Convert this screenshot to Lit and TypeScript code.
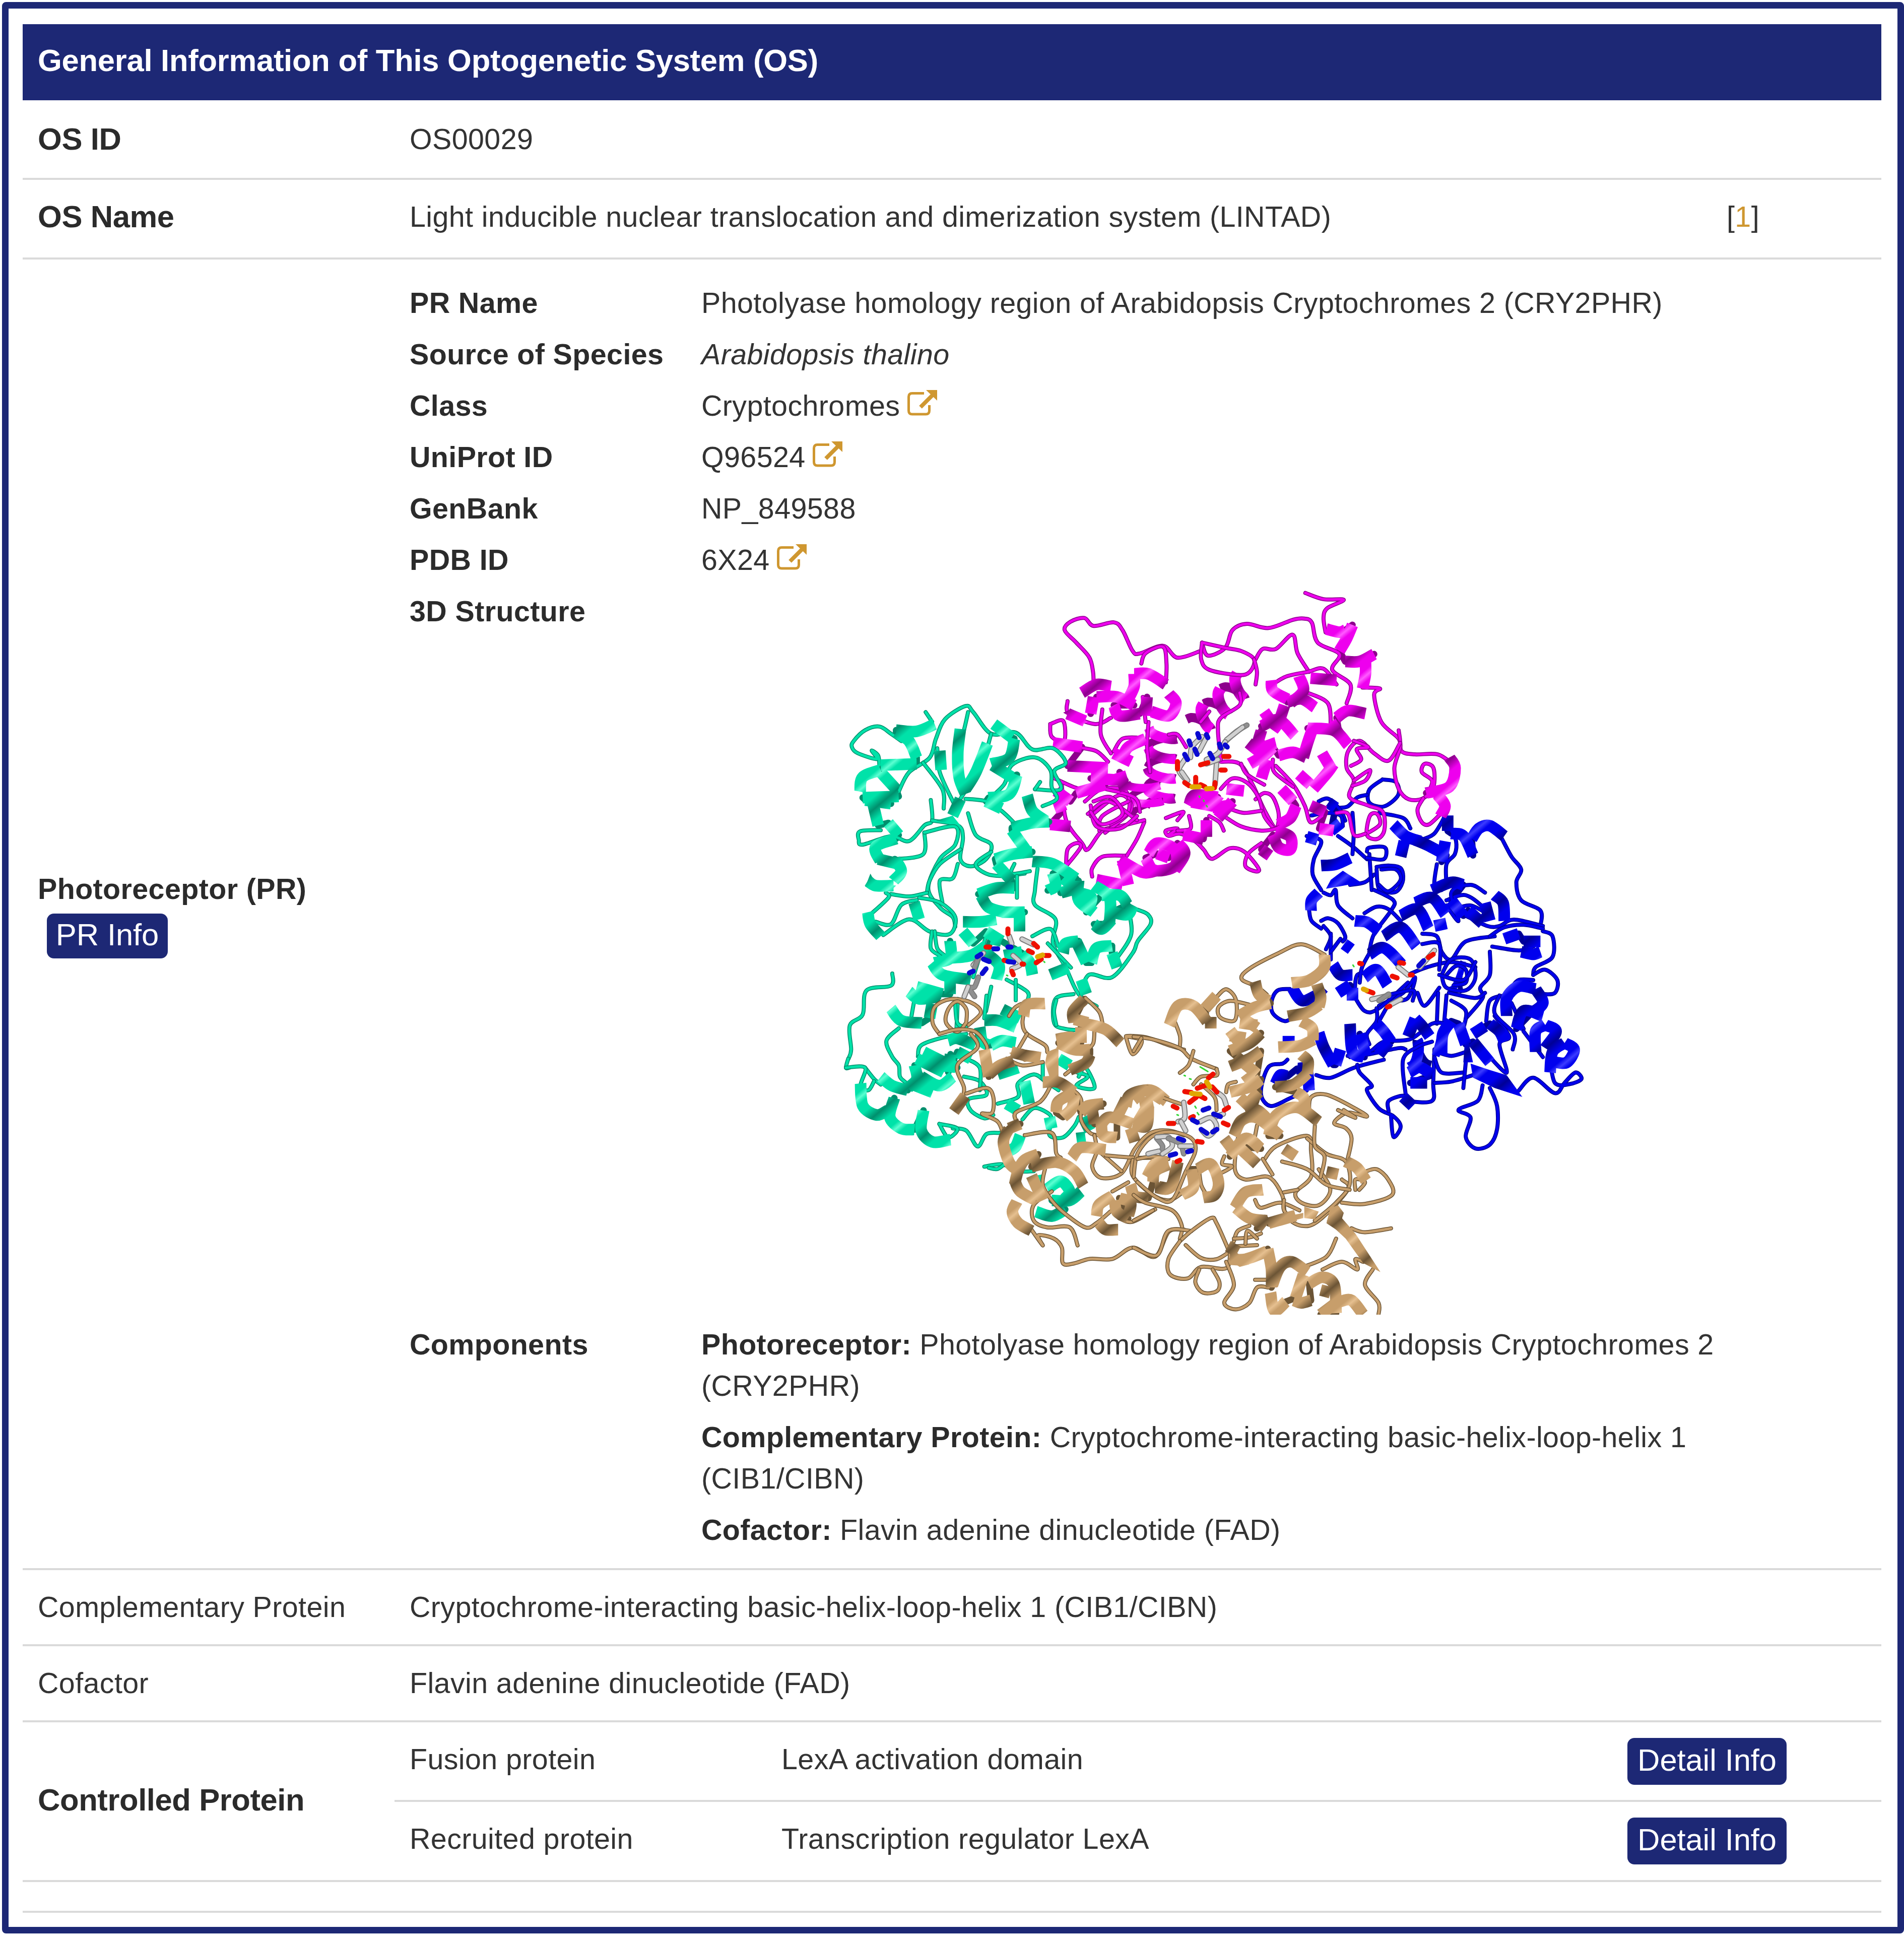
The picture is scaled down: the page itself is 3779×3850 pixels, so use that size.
import { css, html, svg, LitElement } from "lit";
import { customElement, property } from "lit/decorators.js";

type Point = [number, number];

interface Region {
  x: number;
  y: number;
  sx: number;
  sy: number;
}

interface Strand {
  region: Region;
  // thin loops
  coils?: string;
  // wide flat bands
  bands?: string;
  // "x,y x,y radius turns"
  helices?: string;
  // filled arrow heads
  sheets?: string;
}

interface Chain {
  name: string;
  dark: string;
  mid: string;
  light: string;
  strands: Strand[];
}

const NORTH_WEST: Region = { x: 1600, y: 1350, sx: 0.5102, sy: 0.4783 };
const NORTH: Region = { x: 2050, y: 1150, sx: 0.574, sy: 0.4145 };
const EAST: Region = { x: 2450, y: 1500, sx: 0.4783, sy: 0.5102 };
const SOUTH_WEST: Region = { x: 1650, y: 1850, sx: 0.4464, sy: 0.4464 };
const SOUTH: Region = { x: 2250, y: 1850, sx: 0.3827, sy: 0.5102 };

const CHAINS: Chain[] = [
  {
    name: "blue",
    dark: "#000096",
    mid: "#0000ee",
    light: "#3c3cff",
    strands: [
      {
        region: EAST,
        coils: `300,310 360,330 330,400 325,460 360,520
          615,90 560,130 560,180 620,195 680,150 670,100 615,90
          550,150 510,160 470,195 430,200
          350,175 390,165 440,210 460,250
          320,230 380,220 440,230 450,270
          430,310 490,350 550,400
          490,220 495,300 490,380
          600,220 700,240 730,280
          870,240 830,300 790,320
          1110,320 1150,390 1190,440 1170,490 1190,560 1270,600 1270,660
          900,290 920,330 915,380 880,420 880,500
          840,420 830,500 860,520
          480,500 540,490 580,460
          560,380 565,450 570,520
          590,430 640,425 690,435 700,480 680,520 650,530 600,515 590,440
          610,440 670,440 690,480 640,525 600,500
          550,370 560,355 625,355 620,400 550,395
          310,600 320,640 360,670
          370,530 400,540 420,520 430,580 490,630
          360,640 390,630 430,650 460,700 450,720
          380,750 400,700 370,660
          580,520 660,560 650,600 580,690 560,760
          540,610 590,585 640,595 690,640
          960,620 1050,660 1100,660 1160,635 1280,660
          1280,680 1320,700 1320,780 1250,820 1240,850
          1070,740 1180,755 1240,740
          1060,760 1060,850 1020,900 1030,940 960,1020
          780,690 840,700 860,760 900,790 960,720 1080,700
          1280,670 1200,655 1120,665 1060,700
          720,850 800,820 900,800 1000,820
          780,730 850,730 850,830
          860,850 900,790 980,790 1000,860 960,910 880,900 860,850
          880,850 920,815 960,830 960,880 910,890
          850,850 950,870 1000,800
          880,560 960,540 1040,600 1000,640
          900,600 980,580 1060,620
          880,580 930,640 900,530 980,500 1040,530
          600,970 700,920 750,860 720,940 660,950
          490,920 540,990 600,980 720,880
          760,920 790,970 850,900
          630,930 740,910 740,950
          500,900 510,850 560,840
          570,750 530,820 520,880
          590,980 590,1030 550,1080 560,1120
          600,1030 630,980
          400,690 400,790
          400,760 440,710
          230,905 180,910 155,950 160,1000 210,1030 250,1010
          845,920 840,1040
          880,930 870,1040
          900,950 960,990 950,1060
          890,920 1000,940 1040,920
          1045,1030 1060,950 1120,930
          480,1170 560,1150 620,1110 730,1100 820,1040 880,1040
          470,1165 550,1160 680,1135 710,1140
          340,1240 400,1250 500,1210 620,1180
          510,1200 520,1230 570,1280 550,1300 600,1370 660,1400 690,1440 660,1480 650,1400
          640,1380 640,1340 700,1320 720,1340 820,1340 825,1270 830,1140
          710,1310 700,1180 760,1130 820,1110
          830,1170 860,1230 950,1230
          840,1150 900,1165 960,1150
          830,1270 900,1265 990,1240
          960,1190 950,1290
          1030,1280 1010,1340 930,1375 980,1405 960,1480 1000,1525 1060,1510 1090,1450 1090,1360 1060,1290
          1310,1180 1330,1270 1390,1275 1440,1255 1415,1230 1370,1270 1330,1310 1240,1250 1180,1300
          1080,1010 1140,1090 1100,1120 1130,1230 1060,1170
          1100,930 1080,1000 1160,1080 1155,1140
          1150,900 1180,870 1240,870
          220,1180 200,1195 140,1210 110,1310 150,1360 230,1330 300,1300`,
        bands: `390,180 420,200
          400,290 440,260
          660,265 710,310 770,330
          690,390 705,330
          750,325 800,345 880,385
          860,410 875,330
          885,230 885,290
          900,300 950,310 990,385
          985,320 1015,280 1060,270 1120,310
          300,312 345,325
          360,425 420,420 480,395
          350,530 320,560 318,600
          500,640 550,645 600,680
          410,810 440,850 490,850
          455,730 485,750
          430,920 480,890
          490,900 490,950
          240,900 280,950 340,930
          200,1110 250,1110
          350,920 370,900
          350,1075 370,1130 410,1200
          420,1200 440,1140
          480,1040 490,1150 540,1170
          520,1080 545,1160
          590,1040 620,1070 650,1110
          640,1110 600,1160
          720,1090 750,1020
          750,1020 780,1050 810,1090
          170,1275 190,1240 220,1245
          260,1215 300,1220 310,1300
          860,1160 865,1080 900,1030
          930,1040 960,1120
          990,1110 1060,1190
          990,1080 1040,1050
          1060,1040 1100,1070 1120,1110
          1190,760 1240,770 1270,760
          1120,710 1180,690
          1200,720 1270,720
          830,660 880,650
          540,860 590,830 635,890
          560,770 620,745 695,810
          620,700 690,665 755,740
          690,620 760,595 805,670
          750,570 820,550 875,615
          820,520 900,490 950,500
          900,560 950,620
          970,600 1030,650
          1080,540 1115,570 1120,640
          1040,570 1060,640
          700,1325 740,1360
          725,1230 770,1210 820,1240
          730,1270 800,1270`,
        helices: `720,1160 810,1150 26 1
          910,850 960,860 30 1`,
        sheets: `380,515 400,480 450,445 525,490 440,505
          980,1195 1060,1220 1130,1240 1195,1325 1080,1290 990,1250
          950,1190 960,1060 990,1190
          820,1160 850,1060 880,1110 850,1170`,
      },
      {
        // long coiled helix on the outer rim
        region: EAST,
        coils: `1240,850 1290,830 1340,870 1330,920 1280,925
          1150,960 1200,1060
          1200,1070 1280,1170`,
        bands: `1130,1010 1130,940 1180,895 1250,905
          1250,905 1280,960 1230,1000
          1170,1060 1200,990 1280,1010
          1250,1150 1250,1070 1290,1045
          1290,1045 1335,1070 1290,1135
          1310,1230 1320,1150 1370,1115
          1370,1115 1410,1140 1380,1190 1330,1190`,
      },
    ],
  },
  {
    name: "magenta",
    dark: "#8d008d",
    mid: "#ee00ee",
    light: "#ff5cff",
    strands: [
      {
        region: NORTH,
        coils: `942,62 1005,92 1075,95 1018,135 1005,180 1012,250
          210,500 208,440 195,370 150,300 110,240 130,200 178,182 210,220 280,203 310,240 345,340 370,352 450,315 500,372 580,340
          585,300 605,362 665,325 690,240 740,210 815,230 900,190 940,185 965,205 985,300 1060,355 1035,430 1098,500 1085,590
          585,300 665,325 720,340 765,380 750,440 710,455 610,430 582,380 585,300
          770,380 795,330 840,330 898,262 915,350 955,440
          765,380 775,440 770,500
          375,400 390,350 450,320 462,400 460,490
          1140,515 1200,520 1180,550 1205,680 1265,760 1275,820 1320,835 1400,835 1450,880
          1265,720 1270,800 1250,900 1265,1000 1300,1050 1350,1045 1385,990 1385,900 1355,880 1345,920 1380,960 1370,1010
          1270,780 1230,865 1180,830 1130,770 1090,820 1085,900 1110,960 1095,1040 1160,1080 1210,1110 1215,1200 1190,1240 1155,1220 1165,1130 1190,1120 1200,1170 1160,1210
          1110,960 1165,910 1150,960 1105,985
          1110,770 1160,800 1120,810 1135,860 1100,890
          1350,1045 1330,1100 1345,1160 1370,1170 1410,1120
          840,890 900,980 940,1080 960,1160 1000,1130
          1050,1115 1090,1120 1110,1220 1150,1215
          650,870 715,880 760,980 800,1100 840,1190 850,1120 830,1040 800,1020 770,1050
          650,1000 690,950 740,970 780,1040 800,1130 830,1185
          660,1130 720,1180 790,1200 840,1190 870,1165
          690,1100 730,1115 790,1105
          720,880 740,930 800,980
          830,860 835,920 900,990
          470,1220 500,1190 460,1200 470,1225 510,1215 560,1250 590,1290 620,1335 680,1285 730,1300 780,1380 770,1395 735,1370 745,1310 790,1260
          320,1320 240,1325 205,1380 205,1420
          325,1320 360,1240 385,1160
          60,690 105,675 108,770 65,750 60,690
          120,580 125,640 215,690 270,660
          110,770 160,800 220,820 260,870
          240,620 235,740 270,830
          280,820 310,760 370,755
          100,980 115,1150 170,1260 190,1290 240,1200 300,1180 385,1150
          115,1370 120,1290 150,1260 165,1280 115,1370
          75,950 160,1000 230,1000
          400,680 395,800 405,920
          380,560 390,680
          950,540 1020,590 1030,700
          840,490 880,460 950,440 1005,425 1050,500
          715,540 715,600 650,660 640,720 650,860
          580,680 610,630
          470,740 500,740 530,800
          660,1200 645,1160 610,1130
          540,1130 545,1190 500,1200
          200,1130 300,1030 340,1100 250,1210
          180,1060 240,1000 320,1010 330,1110 270,1170
          190,1120 260,1060 360,1150
          230,1200 240,1130 330,1060
          200,1080 220,1180 300,1190 360,1130
          210,1060 270,1040 310,1120 240,1170 200,1110
          250,1000 350,1040 370,1110
          460,1140 520,1110 500,1150`,
        bands: `1015,235 1060,250 1080,240
          1105,215 1085,280 1060,340
          1080,390 1130,390 1180,355
          1150,390 1150,450 1140,520
          330,570 350,510 350,450
          350,450 400,450 460,500
          120,640 180,675
          70,780 170,800
          120,890 260,900
          210,560 200,640
          220,560 290,560 350,600
          280,600 300,650 370,640
          395,560 390,650
          470,545 495,590 470,650 410,630
          1440,850 1460,900 1440,990 1360,1020
          1400,1030 1425,1080 1410,1130
          220,1435 310,1460
          310,1340 330,1460
          300,1340 380,1400 430,1390
          85,1050 100,1110
          60,1170 130,1180
          80,1010 130,1060
          150,1020 250,980
          200,950 320,960
          300,920 320,1010
          390,760 330,800 310,850
          520,1220 590,1240
          600,1150 600,1230
          540,1080 560,1030 640,1040
          620,1090 680,1080
          690,1060 640,1140
          670,1000 730,1010
          280,830 340,870
          170,540 220,500 270,510
          825,480 830,530 880,570
          880,585 930,570 975,610
          920,460 935,530 890,590
          960,470 1050,480
          800,630 830,690
          790,700 850,670 905,745
          870,600 850,680 830,720
          745,780 790,830
          790,720 780,800 840,780
          750,880 800,840 830,800
          850,840 900,825 945,850
          810,860 790,950
          935,850 950,780 970,700
          950,710 1040,720 1090,790
          1030,680 1060,740
          1050,660 1090,625 1150,640
          1000,830 1030,900
          920,930 960,980
          1040,880 1020,920 970,1000
          860,1000 900,1060
          910,1080 890,1140 850,1170
          960,1080 1010,1110
          990,1190 1040,1200
          840,1200 890,1230 890,1290 850,1280 830,1220
          790,1290 820,1320
          400,1310 430,1260 490,1290 490,1370 420,1390 390,1330
          430,1310 470,1330
          500,1260 525,1310 490,1390`,
        helices: `735,490 560,710 24 3
          450,710 440,1090 28 4
          380,960 400,1110 32 2`,
        sheets: `545,1090 570,1010 600,1000 660,1045 620,1110
          105,635 130,620 190,680 170,690`,
      },
    ],
  },
  {
    name: "teal",
    dark: "#008f6d",
    mid: "#00e2a9",
    light: "#5cffd2",
    strands: [
      {
        region: NORTH_WEST,
        coils: `285,350 280,310 255,290 275,325 200,300 178,275 185,250 230,205 285,190 330,220 370,250
          360,460 400,380 480,320 505,240 540,160 620,105 650,130 720,220 815,215 880,285 960,280 1010,340 965,375 990,450 890,450
          465,130 490,170
          700,500 770,430 800,350 890,318 950,370 955,440 975,490 920,520
          890,450 910,420
          620,490 700,500 760,540 810,590
          630,130 615,200 590,300 590,390
          720,220 680,360 630,440 570,540
          510,280 520,380 575,510
          455,340 530,450 535,530
          485,495 490,580 460,600 400,665 330,645 220,680 205,660 210,625 290,620
          490,580 590,600 610,650 600,740 640,770 700,740 720,680 660,640 630,550
          460,630 455,720 350,740
          460,630 580,605 580,680 520,740 475,860 520,940 570,980 580,1020
          600,700 520,760 480,830 470,880
          590,760 570,820 520,830 530,920
          330,885 400,895 470,880
          310,880 320,900 250,970
          270,1000 330,1010 370,930 430,910
          300,1055 400,990 480,1040 560,1050 580,980 520,920 440,900
          490,1040 485,1110 520,1140
          500,1040 510,1110 540,1140
          720,710 660,760 700,800 760,810 850,800
          810,760 800,800 870,790
          900,780 890,870 890,930 970,990 960,1090 1010,1190 1060,1300 1130,1350
          820,810 820,900
          1290,950 1330,970 1340,1010 1290,1080 1270,1130 1190,1230 1100,1220 1070,1300
          1250,930 1265,1050 1210,1150
          335,1215 330,1265 235,1285 220,1385 170,1430 175,1530 165,1568
          420,1330 410,1390
          720,1270 700,1370
          780,1240 860,1290 860,1330
          940,1090 1030,1190
          1040,1300 970,1320 965,1420 1010,1445 1070,1450
          700,1060 650,1230
          590,1320 585,1440
          880,1060 950,1030 980,1100`,
        bands: `500,180 430,210 350,205
          350,215 400,250 430,320
          430,345 290,350
          600,200 590,300 595,400 620,470
          705,260 660,380 620,450
          520,290 525,370
          600,490 570,560
          240,830 270,850 340,850
          240,960 250,1010 290,1060
          420,920 440,990
          210,460 220,400 290,370
          290,380 350,450
          360,480 220,485
          230,495 330,510
          260,510 280,600
          320,590 360,640
          350,655 270,690 290,750
          280,740 360,760
          345,740 370,790 340,830
          730,180 800,235
          810,240 790,320 720,345
          725,350 800,400
          820,390 790,470 710,485
          700,500 760,530
          860,475 880,540 930,580
          945,585 880,590 800,610
          800,620 860,710
          880,710 800,720 735,740
          740,760 800,830
          810,860 740,860 670,885
          680,890 710,940 770,960
          760,960 850,960
          830,960 830,1040
          1070,1240 1090,1300
          950,1220 1020,1190
          610,1000 680,1000 740,990
          610,1040 650,1090
          700,1040 760,1080
          880,750 960,760 1050,820
          960,800 970,850 940,870
          1000,820 1040,860 990,880
          1060,830 1060,910 1120,960
          1120,850 1180,900 1180,1010
          1120,1010 1150,1030 1190,990
          1060,880 1110,900 1090,960
          1150,890 1220,890 1250,930
          1190,960 1250,970 1270,930
          500,1170 560,1150 560,1080
          560,1150 640,1140 700,1100
          490,1170 530,1220 640,1240
          740,1240 750,1180 700,1130
          720,1070 760,1080
          840,1130 870,1170 880,1220
          770,1140 840,1125
          1000,1130 1010,1090 1060,1080
          1050,1080 1090,1170
          1110,1170 1130,1110 1190,1100
          1190,1130 1210,1190
          400,1290 440,1320 520,1310
          430,1270 530,1300
          560,1300 560,1230
          330,1360 370,1410 450,1420
          480,1400 490,1340`,
        sheets: `505,580 570,560 600,600
          230,855 250,800 270,840 350,850 330,870`,
      },
      {
        region: SOUTH_WEST,
        coils: `300,425 245,480 270,550 300,590 305,640 330,665
          150,600 190,650 220,675
          80,600 65,600 75,560
          65,600 150,600 130,680 165,700 190,660
          540,870 600,880 650,950 690,895 750,890
          385,550 400,500 500,465 600,450
          590,640 660,660 690,720 610,740 620,790 680,825 720,810
          600,560 660,600 660,700
          740,760 830,730 830,670 900,630 950,660 1010,700
          850,830 900,780 960,800 980,830 970,900 1030,910 1080,860 1100,820
          1100,640 1130,600 1170,690 1090,680 1140,640 1090,620
          940,580 940,650
          680,1040 760,1030 830,1060 900,1060
          700,1045 740,1050 780,1020
          550,300 560,400 600,420
          690,280 680,380
          820,210 820,300
          390,550 500,610
          480,850 520,910 560,870 480,850
          1000,300 990,350 1000,410`,
        bands: `130,670 140,770 200,810 250,790
          280,735 260,820 310,870 370,875
          410,790 400,880 450,930 530,920
          220,640 270,680 340,700
          340,690 380,650 370,590
          400,640 480,680 540,640
          380,560 440,590 500,620
          410,530 490,570 560,600
          530,540 520,620
          560,530 620,560
          350,670 450,710
          790,970 820,950 840,900
          960,1140 1020,1105 1060,1150 1040,1180
          910,1240 980,1260 1040,1230
          980,1190 1060,1190 1110,1150
          860,660 880,760
          1010,560 1060,590
          740,630 830,600
          520,480 560,470 640,500
          680,390 740,390 820,420
          660,420 670,480 700,500
          710,500 760,480 820,490
          760,340 840,380
          1090,915 1130,910
          970,820 980,870
          780,760 830,790
          1120,820 1150,880
          910,1080 925,1150`,
      },
    ],
  },
  {
    name: "tan",
    dark: "#6b5435",
    mid: "#c79e6b",
    light: "#e6c090",
    strands: [
      {
        region: SOUTH_WEST,
        coils: `480,450 450,400 460,330 530,295 620,310 665,355 610,410
          600,400 600,340 560,305 520,340 510,400 560,440 600,400
          480,450 560,430 640,440 690,500 690,540
          620,450 650,510 560,590 590,690 580,740
          600,715 690,690 720,730 715,800 670,805 740,840 765,900
          780,560 850,590 940,575
          790,370 820,330 860,320 850,400 870,450 950,500 960,530
          870,450 830,520
          1130,290 1190,350 1205,400
          1170,430 1165,490 1140,520
          1310,465 1340,540 1380,480 1310,460 1400,465 1500,500 1568,520
          980,670 930,750 820,800 830,850
          990,660 1060,690 1110,740 1110,830 1150,890 1190,900
          860,900 980,890 1000,980 1020,1000
          890,1320 940,1390 920,1345 990,1360 1025,1400 1030,1470 1080,1470 1150,1450 1250,1450 1340,1400 1440,1440 1500,1330 1568,1320
          980,1150 900,1210 900,1280 960,1310 1060,1310 1095,1390
          950,1050 940,1120 980,1190 1040,1250 1130,1310 1180,1290 1240,1240
          1280,1270 1340,1285 1440,1230
          1170,900 1180,970 1160,1040 1200,1090 1290,1070 1350,960 1420,890 1500,880 1568,900
          1200,980 1290,1060
          1220,990 1350,1000 1480,1000
          1340,1010 1340,1080 1420,1160 1500,1190 1568,1150
          1250,1150 1320,1110
          1040,630 1090,590`,
        bands: `545,795 595,725
          680,520 700,640
          700,630 750,590 810,570
          855,370 870,320 950,315
          800,530 860,545 930,555
          1080,400 1075,350 1125,295
          1080,385 1140,400
          1130,405 1220,430 1285,490
          1000,475 1060,465 1110,480
          1110,420 1110,490
          1010,490 1080,520 1150,520
          1150,540 1130,580 1060,610
          940,665 1010,665 1080,710
          1080,710 1010,750 1000,800
          1030,820 1070,780 1080,720
          1110,800 1140,770 1210,760
          1160,790 1170,850
          1200,850 1240,820 1340,850
          1200,830 1210,900 1270,910
          1270,820 1310,740
          1330,870 1350,930
          1410,770 1400,860 1340,850
          790,870 840,850
          790,870 765,930 790,1020 820,1050
          815,1120 830,1060 860,1010 920,985
          890,1040 1000,1020 1080,1060 1120,1125
          815,1100 840,1150 910,1190
          890,1080 940,1190
          825,1195 805,1240 830,1290 890,1325
          1070,1000 1110,955 1220,965
          1310,770 1330,720 1420,700 1490,750
          1370,760 1430,750
          1180,1260 1190,1210 1250,1170
          1190,1290 1220,1320 1275,1320
          1260,1190 1270,1240 1320,1270
          1280,1180 1330,1200 1320,1260
          1330,1120 1350,1170 1410,1180
          1430,1110 1440,1060 1500,1030
          1460,1130 1510,1130 1530,1060`,
        sheets: `960,530 1010,510 1010,650 970,640 950,580
          790,535 850,515 930,550 860,575`,
      },
      {
        region: SOUTH,
        coils: `690,240 640,210 560,180 600,140 750,80 870,45 990,85
          430,250 480,220 530,260 525,340 450,330 440,290 500,265 600,280
          210,340 240,400 240,440
          0,405 100,415 240,450 300,490 430,530
          240,545 285,515 310,460
          0,460 40,410
          70,600 150,640 260,670
          310,590 350,560 430,555 430,530
          350,590 420,640 430,690
          480,620 490,590 530,580
          910,700 920,640 1000,630 1140,680 1210,715 1110,700 1040,740 1100,760 1130,800 1110,880
          1060,690 1150,720 1090,690
          0,950 20,860 100,790 200,775 300,800 320,850 270,930 200,1040 120,1030 20,970
          20,880 100,870 180,880
          540,800 525,920 580,960 700,950 770,1020 790,1100 870,1140 960,1120 1110,1000 1080,960
          630,790 640,750
          680,880 740,830 900,790 920,850 920,950 840,1010 870,1050 960,1060 1020,1000 960,920
          670,880 720,940
          780,1010 850,1000
          900,800 1000,860 1100,890 1120,980 1050,1050 940,1120
          770,890 900,920 1000,980 1120,1000
          940,750 940,830 990,870 970,950
          630,1040 660,1070 760,1050 860,1080
          780,1040 780,1080 830,1120
          1080,1050 1200,1055 1340,1020 1320,960 1260,920 1200,930
          1150,1000 1150,960 1200,970 1170,1000
          1130,1150 1200,1165 1335,1150
          1050,1190 1000,1260 880,1300
          270,1215 350,1265 430,1270 500,1240
          0,1120 100,1080
          0,1020 60,1050 200,1080 250,1140 240,1190
          0,1225 120,1255 180,1160 300,1160
          240,1200 300,1160 400,1110 430,1130 490,1230
          240,1200 180,1270 190,1330 280,1345 350,1300 480,1305 500,1240
          480,1280 520,1370 470,1440 530,1465 600,1440 640,1380 700,1380
          340,1310 320,1360 360,1400 430,1395 445,1360 410,1310
          520,1200 540,1160 600,1140
          520,1190 600,1185 660,1170
          520,1220 640,1215
          580,1210 590,1160 640,1190
          340,930 350,980 370,1010
          440,940 510,910 460,900 470,870
          630,1350 700,1350
          1240,1310 1200,1370 1270,1440 1270,1485
          980,1310 1080,1280 1160,1310 1150,1270 1190,1280`,
        bands: `950,200 970,250 960,290
          990,85 985,140 910,185 820,195
          870,345 925,370 930,420
          965,280 900,310 800,325
          870,475 905,500 900,550
          935,415 860,440 750,445
          905,545 830,590 735,600
          840,620 880,640 890,690
          580,340 640,370
          500,380 560,440
          660,390 600,430 500,460
          530,480 640,550
          660,460 600,490 500,520
          500,400 580,410
          580,550 640,610
          660,570 600,600 500,620
          550,350 640,360
          550,640 620,690
          650,620 600,660
          630,190 650,240 700,265
          710,275 630,290 545,325
          185,360 230,285 310,285 380,345
          370,295 430,245
          370,350 430,350
          0,650 60,615 150,650
          20,740 60,690
          520,790 560,730 640,720 760,790
          700,790 740,710 850,680 960,735
          580,700 640,690 700,730
          470,800 510,840
          500,870 580,800 660,840
          540,830 640,900
          1100,890 1160,915 1205,965
          1000,930 1060,940
          670,1000 580,1010 525,1070
          530,1070 600,1110 690,1120
          640,1150 680,1110
          700,1130 840,1100
          70,950 110,900 180,890
          110,990 190,990 230,890
          250,1020 310,990 300,920
          330,920 400,900 440,970 420,1020 360,1030
          500,1270 580,1270 690,1240
          695,1230 715,1310 715,1380
          720,1370 760,1300 820,1280 900,1320
          710,1400 730,1470 790,1435
          840,1420 880,1330
          830,1430 870,1440 920,1430
          910,1365 980,1340 1040,1370 1050,1480
          970,1485 1050,1440
          1070,1435 1130,1430 1190,1485
          970,1390 1020,1400
          780,840 840,870
          500,1250 530,1210`,
        sheets: `1000,1120 1080,1110 1150,1170 1280,1320 1190,1285 1100,1190
          1020,1070 1060,1060 1090,1090 1060,1160 1000,1130
          885,1065 960,1085 940,1115 885,1110
          690,1120 880,1090 880,1110 700,1145
          490,1270 530,1240 600,1290 550,1300`,
      },
    ],
  },
];

const ATOM = {
  c: "#d0d0d0",
  g: "#909090",
  o: "#ee1000",
  n: "#0a0ad0",
  p: "#e0a800",
  h: "#35d835",
};

// atom key followed by the points of the stick
const LIGANDS: { region: Region; sticks: string }[] = [
  {
    region: NORTH,
    sticks: `g 740,695 700,730 665,775
      c 725,705 670,765
      c 665,775 640,830 600,860
      c 585,750 550,800 545,850
      c 600,755 575,820
      c 525,860 505,910 525,950
      c 515,920 535,960
      c 635,880 630,980
      c 640,860 600,880
      n 600,740 605,755
      n 570,735 575,755
      n 540,770 545,790
      n 525,835 535,860
      n 560,810 568,835
      n 645,785 650,805
      n 665,790 672,800
      n 612,830 622,855
      o 500,870 500,905
      o 525,970 540,985
      o 563,945 563,975
      o 580,980 595,990
      o 630,970 628,995
      o 650,910 665,910
      o 580,885 605,875
      o 660,845 678,845
      p 550,990 575,990
      p 600,1000 620,998
      h 575,1035 577,1040
      h 590,1055 592,1060
      h 600,1080 603,1086`,
  },
  {
    region: NORTH_WEST,
    sticks: `c 790,1060 800,1090
      c 840,1072 885,1095
      c 690,1130 650,1180
      g 670,1150 655,1190
      c 805,1140 835,1175 800,1195
      g 670,1230 655,1270 635,1275 655,1310
      c 630,1270 615,1310
      o 785,1030 785,1050
      o 700,1105 715,1105
      o 885,1090 900,1105
      o 865,1120 880,1128
      o 895,1170 915,1155
      o 930,1140 945,1140
      o 800,1205 806,1220
      o 770,1160 778,1162
      o 840,1175 846,1176
      n 785,1105 797,1105
      n 730,1112 745,1112
      n 690,1155 712,1165
      n 665,1145 680,1135
      n 785,1165 808,1168
      n 635,1212 650,1205
      n 685,1215 700,1195
      p 900,1145 920,1138
      h 925,1165 928,1168
      h 780,1222 784,1224`,
  },
  {
    region: EAST,
    sticks: `c 830,755 770,820
      c 680,820 720,850
      c 570,945 640,930
      g 600,950 640,925
      c 650,965 690,945
      n 765,815 785,795
      o 805,782 825,770
      o 685,802 702,805
      o 655,855 675,862
      o 550,912 575,920
      o 635,975 645,972
      o 520,805 528,807
      o 730,850 738,850
      p 535,905 548,910
      h 492,812 496,818`,
  },
  {
    region: SOUTH,
    sticks: `c 430,620 465,640 480,670
      c 465,705 430,715
      c 260,660 265,720 230,735
      c 245,735 270,770
      c 345,735 400,720 430,755 390,790 355,770
      g 120,800 150,830 140,855
      c 120,795 180,795 200,830 150,860
      g 180,800 240,820 260,860
      c 240,830 300,830
      c 75,860 130,850
      o 265,618 300,622
      o 330,605 380,592
      o 388,565 412,550
      o 408,600 432,620
      o 290,660 325,640
      o 345,635 370,645
      o 470,690 492,680
      o 205,675 225,682
      o 180,742 208,742
      o 295,720 310,715
      o 465,740 490,748
      o 330,812 355,815
      o 225,890 240,885
      n 360,690 390,682
      n 415,705 450,715
      n 305,728 330,738
      n 350,765 380,780
      n 410,775 432,765
      n 232,800 260,808
      n 280,852 300,848
      n 190,866 218,860
      p 300,625 345,628
      p 378,580 395,600
      h 345,522 385,540
      h 262,555 268,557
      h 290,568 298,570
      h 225,708 232,710
      h 318,675 324,682
      h 330,700 338,708`,
  },
];

function parsePoints(line: string, region: Region): Point[] {
  return line
    .trim()
    .split(/\s+/)
    .map((pair) => {
      const [x, y] = pair.split(",").map(Number);
      return [region.x + x * region.sx, region.y + y * region.sy];
    });
}

function lines(text = "") {
  return text
    .split("\n")
    .map((line) => line.trim())
    .filter(Boolean);
}

/** Smooth path through all points (Catmull-Rom as cubic beziers) */
function curve(points: Point[]) {
  let d = `M${points[0][0].toFixed(1)} ${points[0][1].toFixed(1)}`;
  for (let i = 0; i < points.length - 1; i++) {
    const a = points[i - 1] ?? points[i];
    const b = points[i];
    const c = points[i + 1];
    const e = points[i + 2] ?? c;
    const nums = [
      b[0] + (c[0] - a[0]) / 6,
      b[1] + (c[1] - a[1]) / 6,
      c[0] - (e[0] - b[0]) / 6,
      c[1] - (e[1] - b[1]) / 6,
      c[0],
      c[1],
    ];
    d += `C${nums.map((n) => n.toFixed(1)).join(" ")}`;
  }
  return d;
}

/** Rear turns that join a band to the next one when they are neighbours */
function joints(bands: Point[][]) {
  const result: string[] = [];
  for (let i = 1; i < bands.length; i++) {
    const end = bands[i - 1][bands[i - 1].length - 1];
    const start = bands[i][0];
    const gap = Math.hypot(start[0] - end[0], start[1] - end[1]);
    if (gap > 4 && gap < 48) {
      result.push(curve([end, start]));
    }
  }
  return result;
}

function helix(line: string, region: Region) {
  const parts = line.split(/\s+/);
  const [from, to] = parsePoints(parts.slice(0, 2).join(" "), region);
  const radius = Number(parts[2]);
  const turns = Number(parts[3]);
  const dx = to[0] - from[0];
  const dy = to[1] - from[1];
  const length = Math.hypot(dx, dy);
  const pitch = length / turns;
  const ax = dx / length;
  const ay = dy / length;

  const half = (start: number) => {
    const points: Point[] = [];
    for (let i = 0; i <= 6; i++) {
      const t = start + i / 12;
      const angle = t * Math.PI * 2;
      const side = Math.cos(angle) * radius;
      const along = t * pitch + Math.sin(angle) * pitch * 0.22;
      points.push([
        from[0] + ax * along - ay * side,
        from[1] + ay * along + ax * side,
      ]);
    }
    return curve(points);
  };

  const front: string[] = [];
  const back: string[] = [];
  for (let turn = 0; turn < turns; turn++) {
    front.push(half(turn));
    back.push(half(turn + 0.5));
  }
  return {
    front: front.join(""),
    back: back.join(""),
    width: Math.max(12, Math.min(24, pitch * 0.5)),
  };
}

@customElement("protein-structure")
export class ProteinStructure extends LitElement {
  renderGradient(chain: Chain) {
    return svg`
      <linearGradient
        id="shade-${chain.name}"
        gradientUnits="userSpaceOnUse"
        x1="0" y1="0" x2="30" y2="36"
        spreadMethod="reflect"
      >
        <stop offset="0" stop-color="${chain.dark}" />
        <stop offset="0.4" stop-color="${chain.mid}" />
        <stop offset="0.8" stop-color="${chain.mid}" />
        <stop offset="1" stop-color="${chain.light}" />
      </linearGradient>
    `;
  }

  renderStrand(chain: Chain, strand: Strand) {
    const { region } = strand;
    const shade = `url(#shade-${chain.name})`;
    const coils = lines(strand.coils).map((l) => curve(parsePoints(l, region)));
    const bands = lines(strand.bands).map((l) => parsePoints(l, region));
    const helices = lines(strand.helices).map((l) => helix(l, region));

    return svg`
      ${helices.map(
        (h) => svg`
          <path d="${h.back}" stroke="${chain.dark}" stroke-width="${h.width * 0.8}" />
          <path d="${h.front}" stroke="${shade}" stroke-width="${h.width}" />
        `
      )}
      ${joints(bands).map(
        (d) => svg`<path class="coil" d="${d}" stroke="${chain.dark}" stroke-width="13" />`
      )}
      ${coils.map(
        (d) => svg`
          <path class="coil" d="${d}" stroke="${chain.dark}" stroke-width="8" />
          <path class="coil" d="${d}" stroke="${chain.mid}" stroke-width="5" />
        `
      )}
      ${bands.map(
        (points) => svg`
          <path d="${curve(points)}" stroke="${shade}" stroke-width="23" />
        `
      )}
      ${lines(strand.sheets).map(
        (l) => svg`
          <polygon
            points="${parsePoints(l, region).map((p) => p.join(",")).join(" ")}"
            fill="${shade}"
          />
        `
      )}
    `;
  }

  renderLigand(region: Region, sticks: string) {
    return lines(sticks).map((line) => {
      const atom = line[0] as keyof typeof ATOM;
      const d = curve(parsePoints(line.slice(2), region));
      const carbon = atom === "c" || atom === "g";
      return svg`
        ${carbon
          ? svg`<path class="coil" d="${d}" stroke="#7d7d7d" stroke-width="11" />`
          : ""}
        <path
          class="coil"
          d="${d}"
          stroke="${ATOM[atom]}"
          stroke-width="${atom === "h" ? 3 : carbon ? 7 : 10}"
        />
      `;
    });
  }

  render() {
    return html`
      <svg viewBox="1660 1162 1500 1446">
        <defs>${CHAINS.map((chain) => this.renderGradient(chain))}</defs>
        ${CHAINS.map((chain) =>
          chain.strands.map((strand) => this.renderStrand(chain, strand))
        )}
        ${LIGANDS.map((l) => this.renderLigand(l.region, l.sticks))}
      </svg>
    `;
  }

  static styles = css`
    :host {
      display: block;
      width: 1500px;
      height: 1446px;
    }

    svg {
      display: block;
      width: 100%;
      height: 100%;
    }

    path {
      fill: none;
      stroke-linejoin: round;
    }

    .coil {
      stroke-linecap: round;
    }
  `;
}

@customElement("external-link")
export class ExternalLink extends LitElement {
  render() {
    return html`
      <svg viewBox="0 0 59 51">
        <path
          d="M33 6.5H9.500Q2.500 6.500 2.500 13.500V41Q2.500 48 9.500 48H36.500Q43.500 48 43.500 41V30"
          fill="none"
          stroke="currentColor"
          stroke-width="5"
        />
        <path d="M26 34L50 10" stroke="currentColor" stroke-width="8" />
        <path d="M37 0H59V21Z" fill="currentColor" />
      </svg>
    `;
  }

  static styles = css`
    :host {
      display: inline-block;
      width: 59px;
      height: 51px;
      margin-left: -2px;
      color: #cf9730;
    }

    svg {
      display: block;
    }
  `;
}

@customElement("info-button")
export class InfoButton extends LitElement {
  @property() label = "";

  render() {
    return html`<span class="button">${this.label}</span>`;
  }

  static styles = css`
    :host {
      display: inline-flex;
    }

    .button {
      display: flex;
      flex: 1;
      align-items: center;
      justify-content: center;
      padding-bottom: 5px;
      border-radius: 14px;
      background: #1d2875;
      color: #fff;
      font-size: 61.5px;
      font-weight: 400;
      letter-spacing: -0.1px;
      line-height: 82px;
      white-space: nowrap;
    }
  `;
}

@customElement("app-root")
export class AppRoot extends LitElement {
  photoreceptor = [
    { label: "PR Name", value: "Photolyase homology region of Arabidopsis Cryptochromes 2 (CRY2PHR)" },
    { label: "Source of Species", value: html`<i>Arabidopsis thalino</i>` },
    { label: "Class", value: "Cryptochromes", link: true },
    { label: "UniProt ID", value: "Q96524", link: true },
    { label: "GenBank", value: "NP_849588" },
    { label: "PDB ID", value: "6X24", link: true },
  ];

  components = [
    { label: "Photoreceptor:", value: "Photolyase homology region of Arabidopsis Cryptochromes 2 (CRY2PHR)" },
    { label: "Complementary Protein:", value: "Cryptochrome-interacting basic-helix-loop-helix 1 (CIB1/CIBN)" },
    { label: "Cofactor:", value: "Flavin adenine dinucleotide (FAD)" },
  ];

  controlled = [
    { label: "Fusion protein", value: "LexA activation domain" },
    { label: "Recruited protein", value: "Transcription regulator LexA" },
  ];

  render() {
    return html`
      <div class="frame">
        <div class="header">General Information of This Optogenetic System (OS)</div>

        <div class="row id">
          <div class="title">OS ID</div>
          <div>OS00029</div>
        </div>

        <div class="row name">
          <div class="title">OS Name</div>
          <div>Light inducible nuclear translocation and dimerization system (LINTAD)</div>
          <div class="ref">[<span class="gold">1</span>]</div>
        </div>

        <div class="row receptor">
          <div class="stacked">
            <b>Photoreceptor (PR)</b>
            <info-button class="pr" label="PR Info"></info-button>
          </div>
          <div class="details">
            ${this.photoreceptor.map(
              (item) => html`
                <div class="detail">
                  <b>${item.label}</b>
                  <span>${item.value}${item.link ? html` <external-link></external-link>` : ""}</span>
                </div>
              `
            )}
            <div class="detail structure">
              <b>3D Structure</b>
              <protein-structure></protein-structure>
            </div>
            <div class="detail parts">
              <b>Components</b>
              <div class="components">
                ${this.components.map(
                  (item) => html`<p><b>${item.label}</b> ${item.value}</p>`
                )}
              </div>
            </div>
          </div>
        </div>

        <div class="row plain">
          <div>Complementary Protein</div>
          <div>Cryptochrome-interacting basic-helix-loop-helix 1 (CIB1/CIBN)</div>
        </div>

        <div class="row plain">
          <div>Cofactor</div>
          <div>Flavin adenine dinucleotide (FAD)</div>
        </div>

        <div class="row controlled">
          <div class="title">Controlled Protein</div>
          <div class="proteins">
            ${this.controlled.map(
              (item) => html`
                <div class="protein">
                  <span class="kind">${item.label}</span>
                  <span>${item.value}</span>
                  <info-button class="more" label="Detail Info"></info-button>
                </div>
              `
            )}
          </div>
        </div>

        <div class="row empty"></div>
      </div>
    `;
  }

  static styles = css`
    :host {
      display: block;
      height: 3850px;
      padding: 4px 0 0 4px;
      box-sizing: border-box;
      background: #fff;
      color: #333;
      font-family: "Liberation Sans", Arial, sans-serif;
      font-size: 57.4px;
      line-height: 82px;
      letter-spacing: 0.4px;
    }

    * {
      box-sizing: border-box;
    }

    .frame {
      height: 3833px;
      padding: 31px 32px 0 28px;
      border: 13px solid #1d2875;
      border-radius: 8px;
    }

    .header {
      display: flex;
      align-items: center;
      height: 151px;
      padding: 0 30px 8px;
      background: #1d2875;
      color: #fff;
      font-size: 61.5px;
      font-weight: 700;
      letter-spacing: -0.25px;
    }

    .row {
      display: grid;
      grid-template-columns: 738px 1fr auto;
      align-items: center;
      border-bottom: 4px solid #dadada;
      padding-left: 30px;
    }

    .row > :first-child {
      padding-right: 20px;
    }

    .title,
    b {
      color: #2b2b2b;
      font-weight: 700;
    }

    .title {
      font-size: 61.5px;
      letter-spacing: -0.4px;
    }

    .id {
      height: 158px;
    }

    .name {
      height: 158px;
      padding-bottom: 8px;
    }

    .ref {
      width: 307px;
    }

    .gold {
      color: #cf9730;
    }

    .receptor {
      height: 2601px;
    }

    .stacked {
      display: flex;
      flex-direction: column;
      align-items: flex-start;
      gap: 8px;
      padding-bottom: 3px;
    }

    .pr {
      width: 240px;
      height: 89px;
      margin-left: 18px;
    }

    .details {
      align-self: start;
      padding-top: 35px;
    }

    .detail {
      display: grid;
      grid-template-columns: 579px 1fr;
      align-items: start;
      height: 102px;
      padding-top: 10px;
    }

    .structure {
      height: 1455px;
    }

    .structure protein-structure {
      margin: -9px 0 0 268px;
    }

    .parts {
      height: auto;
    }

    .components {
      display: flex;
      flex-direction: column;
      gap: 20px;
      width: 2100px;
    }

    p {
      margin: 0;
    }

    .plain {
      height: 151px;
      padding-bottom: 2px;
    }

    .controlled {
      height: 317px;
    }

    .controlled .title {
      padding-bottom: 6px;
    }

    .proteins {
      grid-column: 2 / -1;
      margin-left: -30px;
    }

    .protein {
      display: grid;
      grid-template-columns: 738px 1fr 316px;
      align-items: center;
      height: 158px;
      padding: 0 188px 0 30px;
      border-bottom: 4px solid #dadada;
    }

    .protein:last-child {
      height: 155px;
      border-bottom: 0;
    }

    .protein > span {
      padding-bottom: 9px;
    }

    .more {
      height: 93px;
    }

    .empty {
      height: 61px;
    }
  `;
}
